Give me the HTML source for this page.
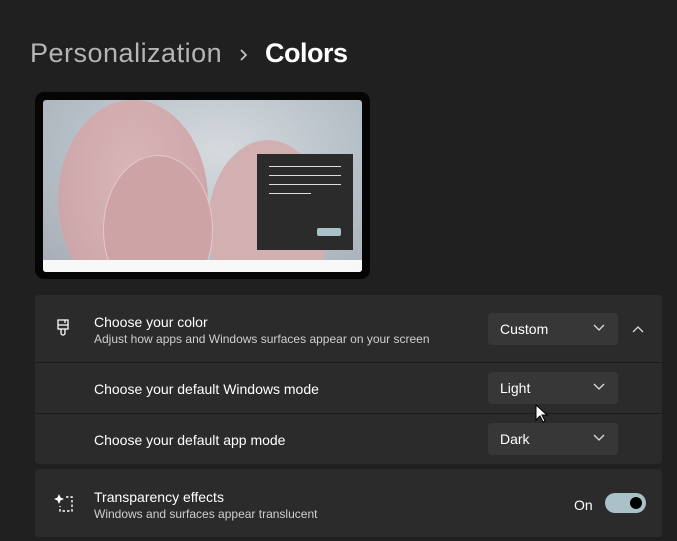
<!DOCTYPE html>
<html><head><style>
*{margin:0;padding:0;box-sizing:border-box}
body{width:677px;height:541px;background:#202020;font-family:"Liberation Sans",sans-serif;color:#fff;position:relative;overflow:hidden}
.a{position:absolute}
.t{font-size:14px;color:#fff}
.s{font-size:12px;color:#cfcfcf}
.dd{position:absolute;left:488px;width:130px;height:32px;background:#373737;border-radius:4px;font-size:14px;padding:8px 12px}
.dd svg{position:absolute;right:13px;top:11px}
</style></head><body>
<div class="a" style="left:30px;top:38px;font-size:27px;color:#b5b5b5;letter-spacing:0.5px">Personalization</div>
<svg class="a" style="left:238px;top:48px" width="10" height="14"><path d="M3 2 L8 7 L3 12" stroke="#ccc" stroke-width="1.6" fill="none"/></svg>
<div class="a" style="left:265px;top:38px;font-size:27px;color:#fff;font-weight:bold;letter-spacing:-0.5px">Colors</div>

<div class="a" style="left:35px;top:92px;width:335px;height:187px;background:#050505;border-radius:9px"></div>
<div class="a" style="left:43px;top:100px;width:319px;height:172px;border-radius:3px;overflow:hidden;background:radial-gradient(ellipse at 55% 30%,#d5dade,#b5bec6 60%,#a7acb5)">
 <div class="a" style="left:15px;top:0;width:150px;height:200px;border-radius:50%;background:radial-gradient(ellipse at 50% 40%,#d9b6b8,#c9a0a4);top:0"></div>
 <div class="a" style="left:165px;top:40px;width:120px;height:170px;border-radius:50%;background:#d2b0b2"></div>
 <div class="a" style="left:60px;top:55px;width:110px;height:150px;border-radius:50%;background:#cda3a6;border:1px solid #e3c9ca"></div>
 <div class="a" style="left:0;top:160px;width:319px;height:12px;background:#f8f8f8"></div>
 <div class="a" style="left:214px;top:54px;width:96px;height:96px;background:#2b2b2b">
  <div class="a" style="left:12px;top:12px;width:72px;height:1px;background:#ddd"></div>
  <div class="a" style="left:12px;top:21px;width:72px;height:1px;background:#ddd"></div>
  <div class="a" style="left:12px;top:30px;width:72px;height:1px;background:#ddd"></div>
  <div class="a" style="left:12px;top:39px;width:42px;height:1px;background:#ddd"></div>
  <div class="a" style="left:60px;top:74px;width:24px;height:8px;border-radius:2px;background:#a9c2c8"></div>
 </div>
</div>

<div class="a" style="left:35px;top:295px;width:627px;height:169px;background:#2b2b2b;border-radius:4px"></div>
<div class="a" style="left:35px;top:362px;width:627px;height:1px;background:#1c1c1c"></div>
<div class="a" style="left:35px;top:413px;width:627px;height:1px;background:#1c1c1c"></div>
<svg class="a" style="left:55px;top:318px" width="16" height="22"><path d="M3 2h10v9H3z M3 7h10 M6 11v4a2 2 0 0 0 4 0v-4 M10 2v3" stroke="#fff" stroke-width="1.3" fill="none"/></svg>
<div class="a t" style="left:94px;top:314px">Choose your color</div>
<div class="a s" style="left:94px;top:332px">Adjust how apps and Windows surfaces appear on your screen</div>
<div class="dd" style="top:313px">Custom<svg width="12" height="8"><path d="M1 1l5 5 5-5" stroke="#ddd" stroke-width="1.3" fill="none"/></svg></div>
<svg class="a" style="left:632px;top:325px" width="12" height="8"><path d="M1 7l5-5 5 5" stroke="#ddd" stroke-width="1.3" fill="none"/></svg>
<div class="a t" style="left:94px;top:381px">Choose your default Windows mode</div>
<div class="dd" style="top:372px">Light<svg width="12" height="8"><path d="M1 1l5 5 5-5" stroke="#ddd" stroke-width="1.3" fill="none"/></svg></div>
<div class="a t" style="left:94px;top:432px">Choose your default app mode</div>
<div class="dd" style="top:423px">Dark<svg width="12" height="8"><path d="M1 1l5 5 5-5" stroke="#ddd" stroke-width="1.3" fill="none"/></svg></div>
<svg class="a" style="left:535px;top:404px" width="14" height="20"><path d="M1 1v15l4-4 3 6 2-1-3-6h5z" fill="#fff" stroke="#000" stroke-width="1"/></svg>

<div class="a" style="left:35px;top:469px;width:627px;height:68px;background:#2b2b2b;border-radius:4px"></div>
<svg class="a" style="left:53px;top:492px" width="22" height="22"><path d="M6 2l1.5 3.5L11 7 7.5 8.5 6 12 4.5 8.5 1 7l3.5-1.5z" fill="#fff"/><path d="M13 5h6v14H7v-5" stroke="#fff" stroke-width="1.4" stroke-dasharray="2.5 2" fill="none"/></svg>
<div class="a t" style="left:94px;top:489px">Transparency effects</div>
<div class="a s" style="left:94px;top:507px">Windows and surfaces appear translucent</div>
<div class="a t" style="left:574px;top:497px">On</div>
<div class="a" style="left:605px;top:493px;width:41px;height:20px;border-radius:10px;background:#a9c1c7"></div>
<div class="a" style="left:630px;top:497px;width:12px;height:12px;border-radius:50%;background:#000"></div>
</body></html>
